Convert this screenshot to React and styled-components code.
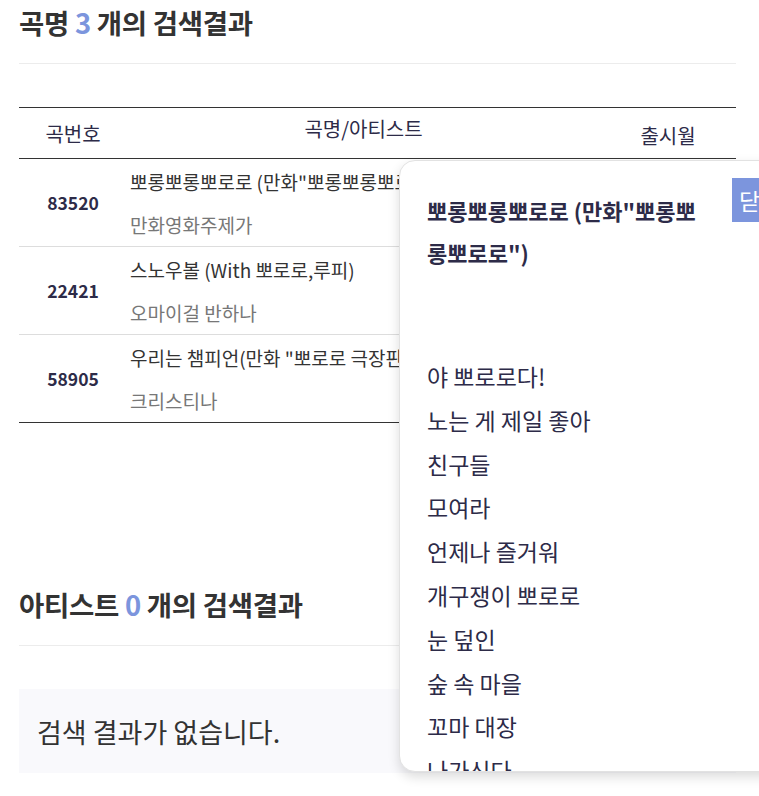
import React from "react";
import styled, { createGlobalStyle } from "styled-components";

const GlobalStyle = createGlobalStyle`
  html, body {
    margin: 0;
    padding: 0;
    background: #fff;
    overflow: hidden;
  }
  body {
    font-family: "Noto Sans CJK KR", "Noto Sans", sans-serif;
    color: #333;
  }
  * { box-sizing: border-box; }
`;

const Page = styled.div`
  position: relative;
  width: 759px;
  height: 796px;
  overflow: hidden;
`;

const Content = styled.div`
  width: 717px;
  margin-left: 19px;
`;

const SectionTitle = styled.h2`
  margin: 0;
  padding-bottom: 19px;
  border-bottom: 1px solid #ececec;
  font-size: 27.5px;
  line-height: 44px;
  font-weight: 700;
  color: #333;
  letter-spacing: -0.3px;
  span {
    color: #7c95dd;
  }
`;

const Section = styled.section`
  margin-top: ${(p) => p.$top || 0}px;
`;

const Table = styled.table`
  width: 100%;
  margin-top: 43px;
  border-collapse: collapse;
  border-top: 1px solid #333;
  border-bottom: 1px solid #333;
  color: #2d2b48;
  font-size: 19px;
  th {
    height: 51px;
    font-weight: 400;
    border-bottom: 1px solid #333;
    padding: 0;
  }
`;

const HeadCell = styled.th`
  width: ${(p) => p.$w}px;
  font-size: 20px;
  text-align: center;
  vertical-align: middle;
  padding-bottom: ${(p) => p.$lift || 0}px !important;
  padding-top: ${(p) => p.$drop || 0}px !important;
`;

const Row = styled.tr`
  border-bottom: 1px solid #ddd;
  &:last-child {
    border-bottom: none;
  }
`;

const NumCell = styled.td`
  text-align: center;
  font-size: 17.5px;
  font-weight: 700;
  padding: 0;
  color: #2d2b48;
`;

const SongCell = styled.td`
  padding: 1px 0 0 3px;
  line-height: 43px;
  white-space: nowrap;
  overflow: hidden;
`;

const SongTitle = styled.div`
  color: #333;
`;

const Artist = styled.div`
  color: #777;
`;

const EmptyBox = styled.div`
  margin-top: 43px;
  height: 84px;
  background: #f9f9fc;
  padding-left: 18px;
  display: flex;
  align-items: center;
  font-size: 27px;
  color: #333;
`;

const Popup = styled.div`
  position: absolute;
  left: 399px;
  top: 160px;
  width: 420px;
  height: 612px;
  background: #fff;
  border: 1px solid #e2e2e2;
  border-radius: 16px;
  box-shadow: 0 5px 12px rgba(0, 0, 0, 0.14);
  overflow: hidden;
  padding: 28px 0 0 27px;
  color: #2d2b48;
`;

const CloseButton = styled.button`
  position: absolute;
  top: 17px;
  right: 30px;
  width: 56px;
  height: 44px;
  border: none;
  padding: 0 0 0 7px;
  text-align: left;
  background: #7c95dd;
  color: #fff;
  font-family: inherit;
  font-size: 23px;
`;

const PopupTitle = styled.div`
  width: 282px;
  font-size: 22px;
  font-weight: 700;
  line-height: 42px;
`;

const Lyrics = styled.div`
  margin-top: 82px;
  font-size: 23px;
  line-height: 43.8px;
  white-space: pre-line;
`;

const songs = [
  { no: "83520", title: '뽀롱뽀롱뽀로로 (만화"뽀롱뽀롱뽀로로")', artist: "만화영화주제가" },
  { no: "22421", title: "스노우볼 (With 뽀로로,루피)", artist: "오마이걸 반하나" },
  { no: "58905", title: '우리는 챔피언(만화 "뽀로로 극장판 슈퍼썰매 대모험")', artist: "크리스티나" },
];

const lyrics = [
  "야 뽀로로다!",
  "노는 게 제일 좋아",
  "친구들",
  "모여라",
  "언제나 즐거워",
  "개구쟁이 뽀로로",
  "눈 덮인",
  "숲 속 마을",
  "꼬마 대장",
  "나가신다",
  "오늘은 또 무슨 일이 생길까",
];

export default function App() {
  return (
    <Page>
      <GlobalStyle />
      <Content>
        <Section>
          <SectionTitle>
            곡명 <span>3</span> 개의 검색결과
          </SectionTitle>
          <Table>
            <thead>
              <tr>
                <HeadCell $w={108}>곡번호</HeadCell>
                <HeadCell $w={473} $lift={10}>곡명/아티스트</HeadCell>
                <HeadCell $w={136} $drop={4}>출시월</HeadCell>
              </tr>
            </thead>
            <tbody>
              {songs.map((s) => (
                <Row key={s.no}>
                  <NumCell>{s.no}</NumCell>
                  <SongCell>
                    <SongTitle>{s.title}</SongTitle>
                    <Artist>{s.artist}</Artist>
                  </SongCell>
                  <td />
                </Row>
              ))}
            </tbody>
          </Table>
        </Section>
        <Section $top={159}>
          <SectionTitle>
            아티스트 <span>0</span> 개의 검색결과
          </SectionTitle>
          <EmptyBox>검색 결과가 없습니다.</EmptyBox>
        </Section>
      </Content>
      <Popup>
        <CloseButton>닫기</CloseButton>
        <PopupTitle>뽀롱뽀롱뽀로로 (만화"뽀롱뽀롱뽀로로")</PopupTitle>
        <Lyrics>{lyrics.join("\n")}</Lyrics>
      </Popup>
    </Page>
  );
}
